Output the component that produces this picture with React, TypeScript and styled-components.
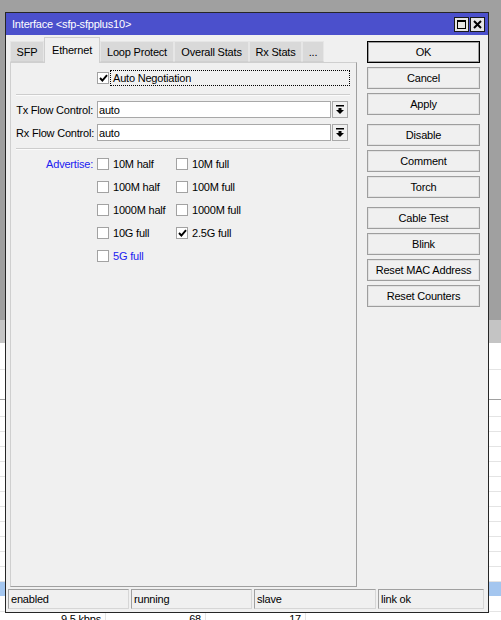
import styled, { createGlobalStyle } from 'styled-components';

const GlobalStyle = createGlobalStyle`
  html, body {
    margin: 0;
    padding: 0;
  }
  body {
    background: #a0a0a0;
    font-family: "Liberation Sans", Arial, sans-serif;
    font-size: 11px;
    letter-spacing: -0.2px;
    color: #000;
  }
  * {
    box-sizing: border-box;
  }
`;

const Screen = styled.div`
  position: relative;
  width: 501px;
  height: 620px;
  overflow: hidden;
`;

/* ---- desktop behind the dialog ---- */

const Backdrop = styled.div`
  display: flex;
  flex-direction: column;
  height: 100%;
`;

const DesktopGrey = styled.div`
  height: 320px;
  flex-shrink: 0;
  background: #a0a0a0;
`;

const TableHeader = styled.div`
  height: 23px;
  flex-shrink: 0;
  background: #c4c4c4;
`;

// $h is the row's inner height, the bottom line comes on top of it
const TableRow = styled.div<{ $h: number; $line?: string; $selected?: boolean }>`
  height: ${p => p.$h + 1}px;
  flex-shrink: 0;
  background: ${p => (p.$selected ? '#a4c6ef' : '#fff')};
  border-bottom: 1px solid ${p => p.$line || '#e4e4e4'};
`;

const DataRow = styled.div`
  display: grid;
  grid-template-columns: 106px 100px 100px 1fr;
  height: 16px;
  flex-shrink: 0;
  background: #fff;
`;

const DataCell = styled.div`
  text-align: right;
  padding: 0 4px 0 0;
  line-height: 15px;
  border-right: 1px solid #e4e4e4;
`;

/* ---- dialog window ---- */

const Window = styled.div`
  position: absolute;
  left: 5px;
  top: 12px;
  width: 484px;
  height: 601px;
  border: 1px solid #262626;
  background: #f0f0f0;
  display: flex;
  flex-direction: column;
`;

const TitleBar = styled.div`
  height: 22px;
  background: #4b50cc;
  display: flex;
  align-items: center;
  padding: 0 3px 0 6px;
`;

const TitleText = styled.div`
  flex: 1;
  color: #fff;
  font-size: 11px;
`;

const TitleButtons = styled.div`
  display: flex;
  gap: 1px;
  padding-top: 1px;
`;

const TitleButton = styled.div`
  width: 15px;
  height: 15px;
  background: #e6e6e6;
  border: 1px solid #1a1a1a;
  display: flex;
  align-items: center;
  justify-content: center;
`;

const WindowBody = styled.div`
  flex: 1;
  min-height: 0;
  display: flex;
  padding: 2px 8px 0 4px;
`;

const TabArea = styled.div`
  width: 347px;
  display: flex;
  flex-direction: column;
`;

const TabStrip = styled.div`
  height: 25px;
  display: flex;
  align-items: flex-end;
`;

const Tab = styled.div<{ $w: number; $active?: boolean }>`
  width: ${p => p.$w}px;
  height: ${p => (p.$active ? 26 : 21)}px;
  margin-bottom: ${p => (p.$active ? -1 : 0)}px;
  position: relative;
  z-index: ${p => (p.$active ? 1 : 0)};
  display: flex;
  align-items: center;
  justify-content: center;
  padding-bottom: ${p => (p.$active ? 2 : 0)}px;
  background: ${p => (p.$active ? '#f0f0f0' : '#d9d9d9')};
  border: 1px solid ${p => (p.$active ? '#cfcfcf' : '#e6e6e6')};
  border-bottom: ${p => (p.$active ? 'none' : '1px solid #d0d0d0')};
  white-space: nowrap;
`;

const TabPanel = styled.div`
  flex: 1;
  border-top: 1px solid #cfcfcf;
  border-left: 1px solid #cfcfcf;
  border-right: 1px solid #a0a0a0;
  border-bottom: 1px solid #a0a0a0;
  padding: 7px 6px 0 5px;
  display: flex;
  flex-direction: column;
`;

const FormRow = styled.div<{ $h: number; $mt?: number; $top?: boolean }>`
  display: grid;
  grid-template-columns: 81px 1fr;
  align-items: ${p => (p.$top ? 'start' : 'center')};
  height: ${p => p.$h}px;
  margin-top: ${p => p.$mt || 0}px;
`;

const Label = styled.div<{ $blue?: boolean }>`
  text-align: right;
  padding-right: 4px;
  line-height: 16px;
  color: ${p => (p.$blue ? '#2020f0' : '#000')};
  white-space: nowrap;
`;

const Separator = styled.div<{ $mt: number }>`
  margin-top: ${p => p.$mt}px;
  height: 2px;
  border-top: 1px solid #cdcdcd;
  border-bottom: 1px solid #fbfbfb;
`;

const CheckLine = styled.div`
  display: flex;
  align-items: center;
  height: 100%;
`;

const Box = styled.div`
  width: 12px;
  height: 12px;
  flex-shrink: 0;
  background: #fff;
  border: 1px solid #a2a2a2;
  display: flex;
  align-items: center;
  justify-content: center;
`;

const FocusLabel = styled.div`
  flex: 1;
  height: 16px;
  margin-left: 1px;
  padding-left: 2px;
  border: 1px dotted #000;
  display: flex;
  align-items: center;
`;

const FieldWrap = styled.div`
  display: flex;
  gap: 1px;
  height: 17px;
  padding-right: 2px;
`;

const TextInput = styled.div`
  flex: 1;
  background: #fff;
  border: 1px solid #a8a8a8;
  padding-left: 1px;
  display: flex;
  align-items: center;
`;

const DropButton = styled.div`
  width: 16px;
  background: #f0f0f0;
  border: 1px solid #a8a8a8;
  display: flex;
  align-items: center;
  justify-content: center;
`;

const CheckGrid = styled.div`
  display: grid;
  grid-template-columns: 79px auto;
  grid-auto-rows: 16px;
  row-gap: 7px;
`;

const CheckItem = styled.div<{ $blue?: boolean }>`
  display: flex;
  align-items: center;
  gap: 4px;
  color: ${p => (p.$blue ? '#2020f0' : '#000')};
  white-space: nowrap;
`;

const ButtonColumn = styled.div`
  width: 113px;
  margin-left: 10px;
  padding-top: 4px;
  display: flex;
  flex-direction: column;
  gap: 9px;
`;

const ButtonGroup = styled.div`
  display: flex;
  flex-direction: column;
  gap: 4px;
`;

const DialogButton = styled.div<{ $default?: boolean }>`
  height: 22px;
  display: flex;
  align-items: center;
  justify-content: center;
  background: #f0f0f0;
  border: 1px solid ${p => (p.$default ? '#000' : '#9e9e9e')};
  box-shadow: inset 0 0 0 1px ${p => (p.$default ? '#9e9e9e' : '#e2e2e2')};
  white-space: nowrap;
`;

const StatusBar = styled.div`
  display: grid;
  grid-template-columns: 121px 121px 122px 1fr;
  gap: 2px;
  padding: 2px 4px 3px 2px;
`;

const StatusCell = styled.div`
  height: 20px;
  border-top: 1px solid #a0a0a0;
  border-left: 1px solid #a0a0a0;
  border-right: 1px solid #d6d6d6;
  border-bottom: 1px solid #d6d6d6;
  padding-left: 2px;
  display: flex;
  align-items: center;
`;

const Tick = () => (
  <svg width="9" height="8" viewBox="0 0 9 8">
    <path d="M1 4 L3.4 6.5 L8 1.2" fill="none" stroke="#000" strokeWidth="1.9" />
  </svg>
);

const CheckBox = ({ checked }: { checked?: boolean }) => <Box>{checked && <Tick />}</Box>;

const DropArrow = () => (
  <svg width="8" height="9" viewBox="0 0 8 9">
    <rect x="0" y="0" width="8" height="1.5" fill="#000" />
    <path d="M2.5 3h3v2H8L4 9 0 5h2.5z" fill="#000" />
  </svg>
);

const tabs = [
  { name: 'SFP', w: 34 },
  { name: 'Ethernet', w: 56, active: true },
  { name: 'Loop Protect', w: 74 },
  { name: 'Overall Stats', w: 75 },
  { name: 'Rx Stats', w: 53 },
  { name: '...', w: 22 },
];

const advertise = [
  ['10M half', false, false],
  ['10M full', false, false],
  ['100M half', false, false],
  ['100M full', false, false],
  ['1000M half', false, false],
  ['1000M full', false, false],
  ['10G full', false, false],
  ['2.5G full', true, false],
  ['5G full', false, true],
] as const;

const buttonGroups = [
  ['OK', 'Cancel', 'Apply'],
  ['Disable', 'Comment', 'Torch'],
  ['Cable Test', 'Blink', 'Reset MAC Address', 'Reset Counters'],
];

const backdropRows = [
  { h: 26 },
  { h: 29, line: '#a0a0a0' },
  { h: 16 },
  ...Array.from({ length: 11 }, () => ({ h: 14 })),
  { h: 14, selected: true, line: '#fff' },
  { h: 14 },
];

export default function App() {
  return (
    <Screen>
      <GlobalStyle />
      <Backdrop>
        <DesktopGrey />
        <TableHeader />
        {backdropRows.map((r, i) => (
          <TableRow key={i} $h={r.h} $line={r.line} $selected={r.selected} />
        ))}
        <DataRow>
          <DataCell>9.5 kbps</DataCell>
          <DataCell>68</DataCell>
          <DataCell>17</DataCell>
        </DataRow>
      </Backdrop>

      <Window>
        <TitleBar>
          <TitleText>Interface &lt;sfp-sfpplus10&gt;</TitleText>
          <TitleButtons>
            <TitleButton>
              <svg width="9" height="9" viewBox="0 0 9 9">
                <rect x="0.5" y="0.5" width="8" height="8" fill="none" stroke="#000" />
                <rect x="0" y="0" width="9" height="2" fill="#000" />
              </svg>
            </TitleButton>
            <TitleButton>
              <svg width="9" height="9" viewBox="0 0 9 9">
                <path d="M1 1L8 8M8 1L1 8" stroke="#000" strokeWidth="2" />
              </svg>
            </TitleButton>
          </TitleButtons>
        </TitleBar>

        <WindowBody>
          <TabArea>
            <TabStrip>
              {tabs.map(t => (
                <Tab key={t.name} $w={t.w} $active={t.active}>
                  {t.name}
                </Tab>
              ))}
            </TabStrip>
            <TabPanel>
              <FormRow $h={16}>
                <span />
                <CheckLine>
                  <CheckBox checked />
                  <FocusLabel>Auto Negotiation</FocusLabel>
                </CheckLine>
              </FormRow>
              <Separator $mt={8} />
              <FormRow $h={17} $mt={5}>
                <Label>Tx Flow Control:</Label>
                <FieldWrap>
                  <TextInput>auto</TextInput>
                  <DropButton>
                    <DropArrow />
                  </DropButton>
                </FieldWrap>
              </FormRow>
              <FormRow $h={17} $mt={6}>
                <Label>Rx Flow Control:</Label>
                <FieldWrap>
                  <TextInput>auto</TextInput>
                  <DropButton>
                    <DropArrow />
                  </DropButton>
                </FieldWrap>
              </FormRow>
              <Separator $mt={7} />
              <FormRow $h={108} $mt={6} $top>
                <Label $blue>Advertise:</Label>
                <CheckGrid>
                  {advertise.map(([name, checked, blue]) => (
                    <CheckItem key={name} $blue={blue}>
                      <CheckBox checked={checked} />
                      {name}
                    </CheckItem>
                  ))}
                </CheckGrid>
              </FormRow>
            </TabPanel>
          </TabArea>

          <ButtonColumn>
            {buttonGroups.map((g, gi) => (
              <ButtonGroup key={gi}>
                {g.map(b => (
                  <DialogButton key={b} $default={b === 'OK'}>
                    {b}
                  </DialogButton>
                ))}
              </ButtonGroup>
            ))}
          </ButtonColumn>
        </WindowBody>

        <StatusBar>
          <StatusCell>enabled</StatusCell>
          <StatusCell>running</StatusCell>
          <StatusCell>slave</StatusCell>
          <StatusCell>link ok</StatusCell>
        </StatusBar>
      </Window>
    </Screen>
  );
}
